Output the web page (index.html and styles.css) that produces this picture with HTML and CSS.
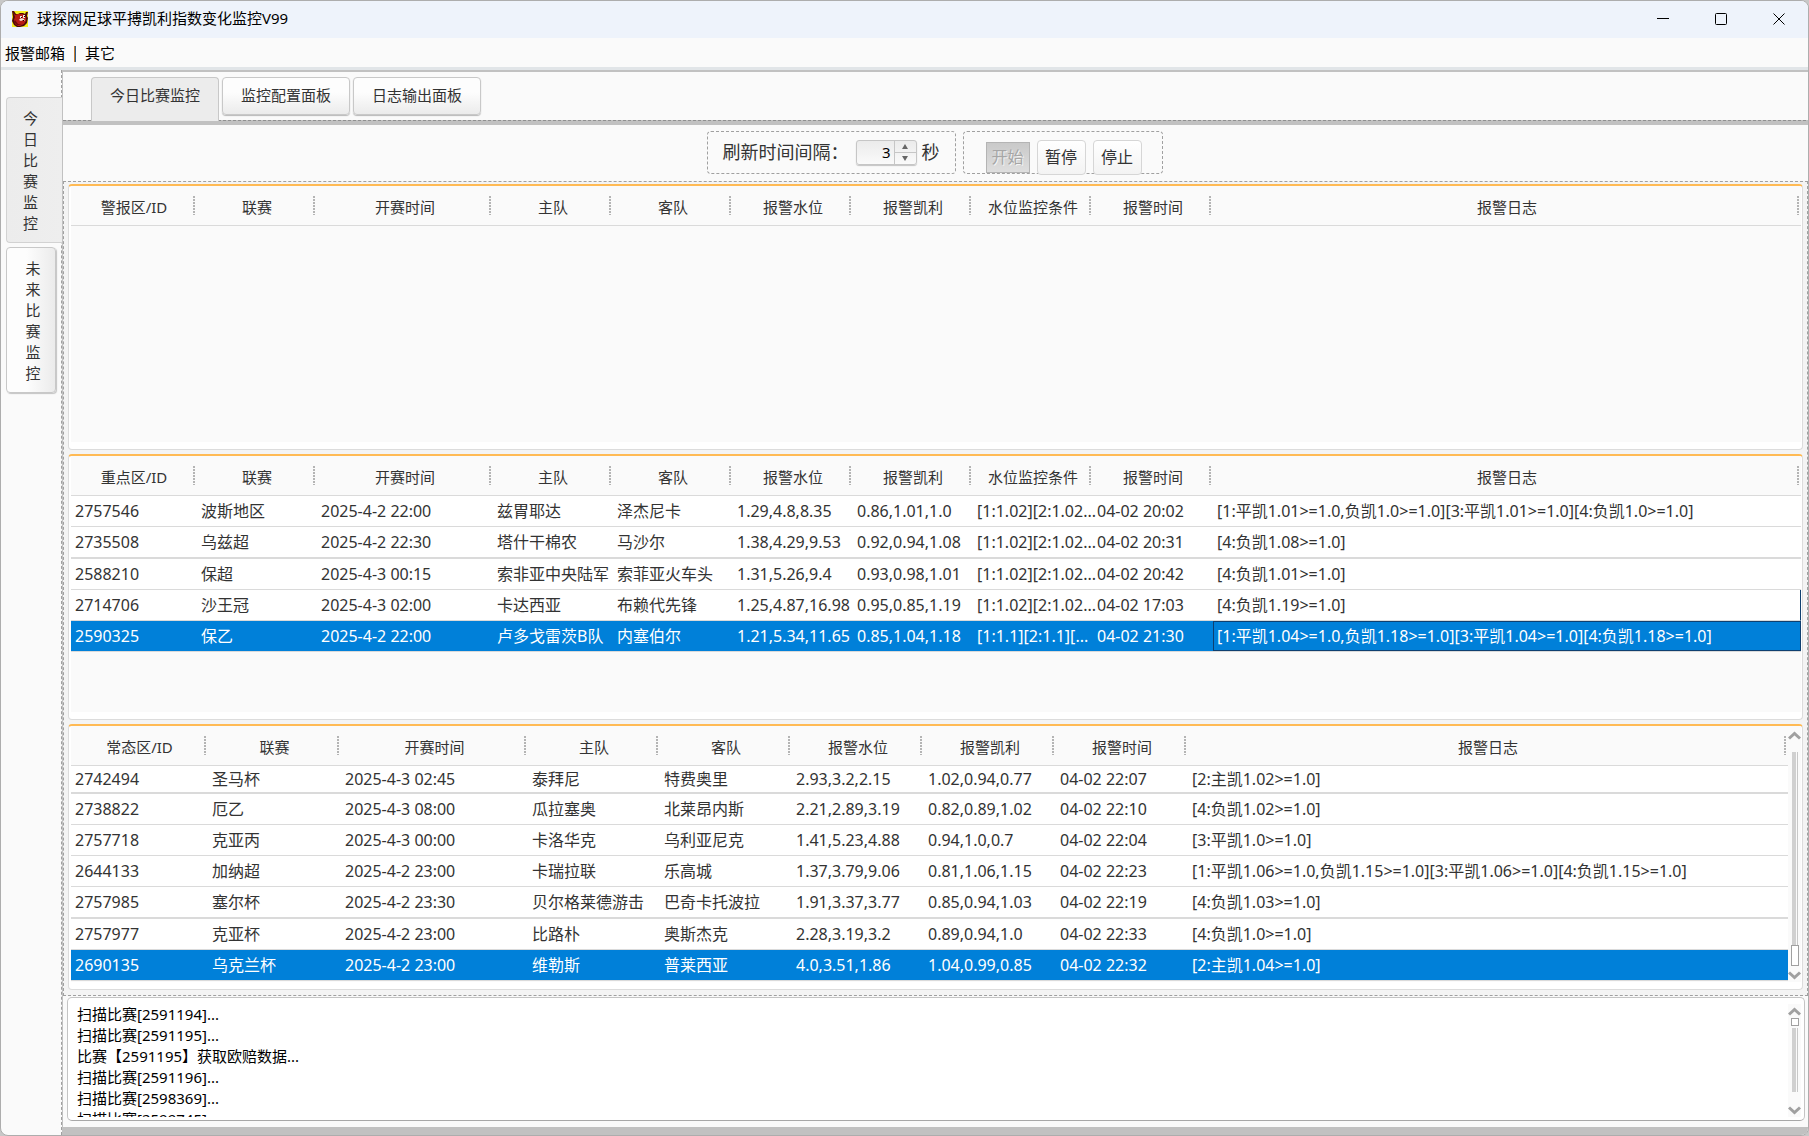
FILE: index.html
```html
<!DOCTYPE html>
<html lang="zh-CN">
<head>
<meta charset="utf-8">
<title>球探网足球平搏凯利指数变化监控V99</title>
<link rel="stylesheet" href="styles.css">
</head>
<body>
<div class="window">
  <header class="titlebar">
    <svg class="logo" viewBox="0 0 16 16" aria-hidden="true">
      <rect width="16" height="16" fill="#f6ee20"/>
      <path d="M0 0h2l2 3h2l2-1h3l2 1 1-2h2l-1 4 1 2-1 5-3 3-4 1H5l-3-2-2-4 1-4z" fill="#4a0c08"/>
      <path d="M1 1l2 3 3-1h5l3 3v4l-2 3-4 2H6l-3-2-1-4 1-3z" fill="#b81c14"/>
      <path d="M3 9l3 4 4 1-5 0-3-3z" fill="#6a0c08"/>
      <path d="M8 5h2v2H8zM11 4h2v3h-2zM7 9c1-2 4-2 5-1l1 2-2-1-2 1z" fill="#f4e6dc"/>
      <path d="M9 6h1v1H9zM12 5h1v1h-1zM11 9h1v1h-1z" fill="#200"/>
    </svg>
    <h1 class="title">球探网足球平搏凯利指数变化监控V99</h1>
    <div class="caption">
      <button class="caption-btn" type="button" aria-label="最小化"><svg width="12" height="12" viewBox="0 0 12 12"><path d="M0 5.500h12" stroke="#000"/></svg></button>
      <button class="caption-btn" type="button" aria-label="最大化"><svg width="12" height="12" viewBox="0 0 12 12"><rect x=".5" y=".5" width="11" height="11" rx="1" fill="none" stroke="#000"/></svg></button>
      <button class="caption-btn" type="button" aria-label="关闭"><svg width="12" height="12" viewBox="0 0 12 12"><path d="M.5.5l11 11M11.500.5l-11 11" stroke="#000"/></svg></button>
    </div>
  </header>
  <nav class="menubar">
    <button type="button" class="menu">报警邮箱</button><span class="bar"></span><button type="button" class="menu">其它</button>
  </nav>
  <div class="workspace">
    <nav class="side">
      <button type="button" class="side-tab side-tab--on"><span>今日比赛监控</span></button>
      <button type="button" class="side-tab"><span>未来比赛监控</span></button>
    </nav>
    <main class="content">
      <nav class="tabs">
        <button type="button" class="tab tab--on">今日比赛监控</button>
        <button type="button" class="tab">监控配置面板</button>
        <button type="button" class="tab">日志输出面板</button>
      </nav>
      <div class="toolbar">
        <div class="group">
          <label for="interval">刷新时间间隔：</label>
          <div class="spinner">
            <input id="interval" type="text" value="3">
            <div class="spin-btns">
              <button type="button" aria-label="增加"><svg width="6" height="5" viewBox="0 0 6 5"><path d="M0 5l3-5 3 5z" fill="#666"/></svg></button>
              <button type="button" aria-label="减少"><svg width="6" height="5" viewBox="0 0 6 5"><path d="M0 0l3 5 3-5z" fill="#666"/></svg></button>
            </div>
          </div>
          <span>秒</span>
        </div>
        <div class="group group--actions">
          <button type="button" class="start" disabled>开始</button>
          <button type="button" class="action">暂停</button>
          <button type="button" class="action">停止</button>
        </div>
      </div>
      <div class="split">
        <section class="panel">
          <div class="view">
          <table class="grid">
            <colgroup><col class="w126"><col class="w120"><col class="w176"><col class="w120"><col class="w120"><col class="w120"><col class="w120"><col class="w120"><col class="w120"><col></colgroup>
            <thead><tr><th>警报区/ID</th><th>联赛</th><th>开赛时间</th><th>主队</th><th>客队</th><th>报警水位</th><th>报警凯利</th><th>水位监控条件</th><th>报警时间</th><th>报警日志</th></tr></thead>
          </table>
          </div>
        </section>
        <section class="panel">
          <div class="view">
          <table class="grid">
            <colgroup><col class="w126"><col class="w120"><col class="w176"><col class="w120"><col class="w120"><col class="w120"><col class="w120"><col class="w120"><col class="w120"><col></colgroup>
            <thead><tr><th>重点区/ID</th><th>联赛</th><th>开赛时间</th><th>主队</th><th>客队</th><th>报警水位</th><th>报警凯利</th><th>水位监控条件</th><th>报警时间</th><th>报警日志</th></tr></thead>
            <tbody>
              <tr><td>2757546</td><td>波斯地区</td><td>2025-4-2 22:00</td><td>兹胃耶达</td><td>泽杰尼卡</td><td>1.29,4.8,8.35</td><td>0.86,1.01,1.0</td><td>[1:1.02][2:1.02...</td><td>04-02 20:02</td><td>[1:平凯1.01&gt;=1.0,负凯1.0&gt;=1.0][3:平凯1.01&gt;=1.0][4:负凯1.0&gt;=1.0]</td></tr>
              <tr class="thick"><td>2735508</td><td>乌兹超</td><td>2025-4-2 22:30</td><td>塔什干棉农</td><td>马沙尔</td><td>1.38,4.29,9.53</td><td>0.92,0.94,1.08</td><td>[1:1.02][2:1.02...</td><td>04-02 20:31</td><td>[4:负凯1.08&gt;=1.0]</td></tr>
              <tr><td>2588210</td><td>保超</td><td>2025-4-3 00:15</td><td>索非亚中央陆军</td><td>索菲亚火车头</td><td>1.31,5.26,9.4</td><td>0.93,0.98,1.01</td><td>[1:1.02][2:1.02...</td><td>04-02 20:42</td><td>[4:负凯1.01&gt;=1.0]</td></tr>
              <tr><td>2714706</td><td>沙王冠</td><td>2025-4-3 02:00</td><td>卡达西亚</td><td>布赖代先锋</td><td>1.25,4.87,16.98</td><td>0.95,0.85,1.19</td><td>[1:1.02][2:1.02...</td><td>04-02 17:03</td><td class="edge">[4:负凯1.19&gt;=1.0]</td></tr>
              <tr class="selected"><td>2590325</td><td>保乙</td><td>2025-4-2 22:00</td><td>卢多戈雷茨B队</td><td>内塞伯尔</td><td>1.21,5.34,11.65</td><td>0.85,1.04,1.18</td><td>[1:1.1][2:1.1][...</td><td>04-02 21:30</td><td class="focus">[1:平凯1.04&gt;=1.0,负凯1.18&gt;=1.0][3:平凯1.04&gt;=1.0][4:负凯1.18&gt;=1.0]</td></tr>
            </tbody>
          </table>
          </div>
        </section>
        <section class="panel">
          <div class="view">
          <table class="grid">
            <colgroup><col class="w137"><col class="w133"><col class="w187"><col class="w132"><col class="w132"><col class="w132"><col class="w132"><col class="w132"><col></colgroup>
            <thead><tr><th>常态区/ID</th><th>联赛</th><th>开赛时间</th><th>主队</th><th>客队</th><th>报警水位</th><th>报警凯利</th><th>报警时间</th><th>报警日志</th></tr></thead>
            <tbody>
              <tr class="clipped"><td>2742494</td><td>圣马杯</td><td>2025-4-3 02:45</td><td>泰拜尼</td><td>特费奥里</td><td>2.93,3.2,2.15</td><td>1.02,0.94,0.77</td><td>04-02 22:07</td><td>[2:主凯1.02&gt;=1.0]</td></tr>
              <tr><td>2738822</td><td>厄乙</td><td>2025-4-3 08:00</td><td>瓜拉塞奥</td><td>北莱昂内斯</td><td>2.21,2.89,3.19</td><td>0.82,0.89,1.02</td><td>04-02 22:10</td><td>[4:负凯1.02&gt;=1.0]</td></tr>
              <tr><td>2757718</td><td>克亚丙</td><td>2025-4-3 00:00</td><td>卡洛华克</td><td>乌利亚尼克</td><td>1.41,5.23,4.88</td><td>0.94,1.0,0.7</td><td>04-02 22:04</td><td>[3:平凯1.0&gt;=1.0]</td></tr>
              <tr><td>2644133</td><td>加纳超</td><td>2025-4-2 23:00</td><td>卡瑞拉联</td><td>乐高城</td><td>1.37,3.79,9.06</td><td>0.81,1.06,1.15</td><td>04-02 22:23</td><td>[1:平凯1.06&gt;=1.0,负凯1.15&gt;=1.0][3:平凯1.06&gt;=1.0][4:负凯1.15&gt;=1.0]</td></tr>
              <tr class="thick"><td>2757985</td><td>塞尔杯</td><td>2025-4-2 23:30</td><td>贝尔格莱德游击</td><td>巴奇卡托波拉</td><td>1.91,3.37,3.77</td><td>0.85,0.94,1.03</td><td>04-02 22:19</td><td>[4:负凯1.03&gt;=1.0]</td></tr>
              <tr><td>2757977</td><td>克亚杯</td><td>2025-4-2 23:00</td><td>比路朴</td><td>奥斯杰克</td><td>2.28,3.19,3.2</td><td>0.89,0.94,1.0</td><td>04-02 22:33</td><td>[4:负凯1.0&gt;=1.0]</td></tr>
              <tr class="selected"><td>2690135</td><td>乌克兰杯</td><td>2025-4-2 23:00</td><td>维勒斯</td><td>普莱西亚</td><td>4.0,3.51,1.86</td><td>1.04,0.99,0.85</td><td>04-02 22:32</td><td>[2:主凯1.04&gt;=1.0]</td></tr>
            </tbody>
          </table>
          </div>
          <div class="scroll">
            <svg width="13" height="9" viewBox="0 0 13 9"><path d="M1 7.500l5.500-5 5.500 5" fill="none" stroke="#a0a0a0" stroke-width="3"/></svg>
            <div class="track track--end"><span class="rail"></span><span class="thumb thumb--long"></span></div>
            <svg width="13" height="9" viewBox="0 0 13 9"><path d="M1 1.500l5.500 5 5.500-5" fill="none" stroke="#a0a0a0" stroke-width="3"/></svg>
          </div>
        </section>
      </div>
      <section class="log">
        <textarea class="log-text" readonly aria-label="日志">扫描比赛[2591194]...
扫描比赛[2591195]...
比赛【2591195】获取欧赔数据...
扫描比赛[2591196]...
扫描比赛[2598369]...
扫描比赛[2599745]...</textarea>
        <div class="scroll">
          <svg width="13" height="9" viewBox="0 0 13 9"><path d="M1 7.500l5.500-5 5.500 5" fill="none" stroke="#a0a0a0" stroke-width="3"/></svg>
          <div class="track"><span class="thumb"></span><span class="rail"></span></div>
          <svg width="13" height="9" viewBox="0 0 13 9"><path d="M1 1.500l5.500 5 5.500-5" fill="none" stroke="#a0a0a0" stroke-width="3"/></svg>
        </div>
      </section>
    </main>
  </div>
</div>
</body>
</html>
```
FILE: styles.css
```css
* { box-sizing: border-box; }
body {
  margin: 0;
  background: #c8c8c8;
  color: #333;
  font: 15px/21px "Noto Sans", "Noto Sans CJK SC", sans-serif;
}
button, input, textarea { margin: 0; padding: 0; border: 0; background: none; font: inherit; color: inherit; }

.window {
  display: flex;
  flex-direction: column;
  height: 100vh;
  min-height: 900px;
  overflow: hidden;
  border: 1px solid #adadad;
  border-radius: 8px;
  background: #fafafa;
}
.titlebar {
  display: flex;
  flex: none;
  align-items: center;
  height: 37px;
  padding: 0 0 2px 11px;
  background: #eef3fb;
  color: #000;
}
.logo { width: 16px; height: 16px; }
.title { flex: 1; margin: 0 0 0 9px; font-size: 15px; font-weight: 400; }
.caption { display: flex; }
.caption-btn { display: flex; align-items: center; justify-content: center; width: 58px; height: 35px; }

.menubar {
  display: flex;
  flex: none;
  align-items: center;
  height: 32px;
  padding: 2px 0 0 4px;
  border-bottom: 3px solid #e1e5e8;
  color: #000;
}
.bar { width: 2px; height: 16px; margin: 0 9px; background: linear-gradient(90deg, #c77a2c 50%, #2d5c8c 50%); }

.workspace { display: flex; flex: 1; min-height: 0; }
.side {
  display: flex;
  flex: none;
  flex-direction: column;
  gap: 4px;
  width: 61px;
  padding: 27px 0 0 5px;
  border-right: 1px dashed #a0a0a0;
}
.side-tab {
  width: 50px;
  height: 146px;
  padding: 1px 0 0 4px;
  border: 1px solid #c8c8c8;
  border-radius: 4px;
  background: linear-gradient(90deg, #fdfdfd 40%, #ebebeb);
  box-shadow: 1px 1px 1px #c4c4c4;
}
.side-tab span { display: block; width: 15px; margin: 0 auto; word-break: break-all; }
.side-tab--on {
  width: 56px;
  padding: 1px 8px 0 0;
  border-right: 0;
  border-color: #d2d2d2;
  border-radius: 4px 0 0 4px;
  background: linear-gradient(90deg, #ececec, #eeeeee);
  box-shadow: none;
}

.content {
  display: flex;
  flex: 1;
  flex-direction: column;
  min-width: 0;
  border-top: 2px solid #c1c1c1;
  border-bottom: 8px solid #c1c1c1;
  border-left: 1px solid #c1c1c1;
}
.tabs {
  display: flex;
  flex: none;
  gap: 3px;
  height: 53px;
  padding: 5px 0 0 28px;
  border-bottom: 4px solid #c1c1c1;
  background: linear-gradient(90deg, #909090 60%, #c1c1c1 60%) 0 100% / 5px 1px repeat-x;
}
.tab {
  width: 128px;
  height: 38px;
  padding-bottom: 2px;
  border: 1px solid #c8c8c8;
  border-radius: 4px;
  background: linear-gradient(#fdfdfd 40%, #ebebeb);
  box-shadow: 0 1px 1px #b8b8b8;
}
.tab--on {
  height: 44px;
  padding-bottom: 8px;
  border-bottom: 0;
  border-radius: 4px 4px 0 0;
  background: #ececec;
  box-shadow: none;
}

.toolbar { display: flex; flex: none; justify-content: center; gap: 7px; padding: 6px 2px 7px 0; }
.group {
  display: flex;
  align-items: center;
  height: 43px;
  padding: 0 15px;
  border: 1px dashed #a0a0a0;
  border-radius: 4px;
  font-size: 18px;
}
.group label { width: 133px; }
.spinner {
  display: flex;
  width: 61px;
  height: 25px;
  margin-right: 5px;
  border: 1px solid #c6c6c6;
  border-radius: 3px;
  background: linear-gradient(#ebebeb, #fafafa);
  box-shadow: 0 1px 1px #c4c4c4;
}
.spinner input { flex: 1; min-width: 0; padding-right: 3px; color: #000; font-size: 15px; text-align: right; }
.spin-btns { display: flex; flex-direction: column; width: 22px; border-left: 1px solid #c6c6c6; }
.spin-btns button { display: flex; flex: 1; align-items: center; justify-content: center; }
.spin-btns button + button { border-top: 1px solid #c6c6c6; }
.group--actions { gap: 7px; padding: 8px 20px 0 22px; align-items: flex-start; }
.start, .action { font-size: 16px; }
.start {
  width: 44px;
  height: 31px;
  margin-top: 2px;
  border: 1px solid #b4b4b4;
  background: linear-gradient(#c9c9c9, #dedede);
  color: #a6a6a6;
  text-shadow: 1px 1px 0 #f4f4f4;
}
.action {
  width: 49px;
  height: 35px;
  border: 1px solid #d6d6d6;
  border-radius: 4px;
  background: linear-gradient(#ffffff, #f3f3f3);
}

.split {
  display: flex;
  flex: 1;
  flex-direction: column;
  gap: 4px;
  min-height: 0;
  padding: 2px 4px 5px;
  border: 1px dashed #a0a0a0;
  background: #f4f4f4;
}
.panel {
  display: flex;
  flex: 1;
  min-height: 0;
  padding: 0 1px 7px 2px;
  border: 1px solid #dcdcdc;
  border-top: 2px solid #ffba54;
  border-radius: 4px;
  background: #fff;
}
.view { flex: 1; min-width: 0; overflow: hidden; background: #fafafa; }
.grid { width: 100%; table-layout: fixed; border-collapse: separate; border-spacing: 0; }
.w120 { width: 120px; }
.w126 { width: 126px; }
.w132 { width: 132px; }
.w133 { width: 133px; }
.w137 { width: 137px; }
.w176 { width: 176px; }
.w187 { width: 187px; }
.grid th {
  height: 40px;
  padding: 3px 0 0;
  border-bottom: 1px solid #dadada;
  background: repeating-linear-gradient(#b4b4b4 0 2px, #fafafa 2px 3px) right 2px top 10px / 2px 19px no-repeat;
  font-weight: 400;
  text-align: center;
}
.grid tbody tr { background: #fff; }
.grid td {
  height: 31px;
  padding: 1px 0 0 4px;
  border-bottom: 1px solid #dadada;
  font-size: 16px;
  white-space: nowrap;
}
.grid .thick td { height: 32px; border-bottom-width: 2px; }
.grid .clipped td { height: 28px; padding-top: 0; border-bottom-width: 2px; }
.grid tbody .selected { background: #0080d9; color: #fff; }
.grid .edge { border-right: 1px solid #0f4070; }
.grid .selected .focus { box-shadow: inset 0 0 0 1px #0f4070; }

.scroll { display: flex; flex: none; flex-direction: column; align-items: center; width: 13px; padding: 5px 0 2px; background: #fafafa; }
.scroll svg { flex: none; }
.track { display: flex; flex: 1; flex-direction: column; align-items: center; gap: 2px; min-height: 0; padding: 2px 0 14px; }
.track--end { gap: 0; padding: 12px 0 5px; }
.rail { flex: 1; width: 6px; border-right: 1px solid #c8c8c8; background: linear-gradient(90deg, #d0d0d0 4px, #fafafa 4px); }
.thumb { flex: none; width: 8px; height: 8px; border: 1px solid #a0a0a0; background: #fff; }
.thumb--long { height: 21px; }

.log {
  display: flex;
  flex: none;
  height: 124px;
  margin: 1px 3px 6px 4px;
  padding: 6px 3px 3px 9px;
  border: 1px solid #c4c4c4;
  border-bottom-color: #a8a8a8;
  border-radius: 5px;
  background: #fff;
  color: #000;
}
.log .scroll { padding-top: 3px; }
.log-text { flex: 1; min-width: 0; resize: none; outline: 0; overflow: hidden; white-space: pre; }
```
